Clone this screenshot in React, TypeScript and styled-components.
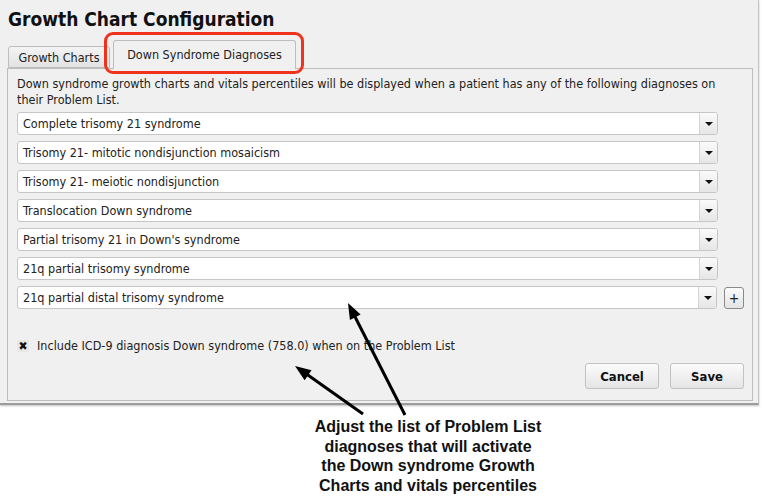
import styled, { createGlobalStyle } from "styled-components";

const GlobalStyle = createGlobalStyle`
    html, body {
        margin: 0;
        padding: 0;
        background: #ffffff;
    }
`;

const uiFont = `"DejaVu Sans Condensed", "DejaVu Sans", sans-serif`;

const Page = styled.div`
    position: relative;
    width: 762px;
    height: 503px;
    overflow: hidden;
    background: #ffffff;
`;

const Dialog = styled.div`
    box-sizing: border-box;
    width: 759px;
    height: 405px;
    background: #f0f0f0;
    border-right: 1px solid #c4c4c4;
    border-bottom: 2px solid #9c9c9c;
    box-shadow: 0 1px 2px rgba(0, 0, 0, 0.25);
    padding-top: 8px;
    font-family: ${uiFont};
    color: #222;
`;

const Title = styled.h1`
    margin: 0 0 0 8px;
    font-family: ${uiFont};
    font-size: 19px;
    font-weight: bold;
    line-height: 22px;
    color: #111;
`;

const TabBar = styled.div`
    display: flex;
    align-items: flex-end;
    height: 38px;
    margin-left: 8px;
    position: relative;
    z-index: 1;
`;

const Tab = styled.div<{ active?: boolean }>`
    box-sizing: border-box;
    position: relative;
    display: flex;
    align-items: center;
    justify-content: center;
    height: ${(p) => (p.active ? 29 : 22)}px;
    width: ${(p) => (p.active ? 183 : 102)}px;
    margin-left: ${(p) => (p.active ? 3 : 0)}px;
    margin-bottom: ${(p) => (p.active ? -1 : 0)}px;
    padding-bottom: ${(p) => (p.active ? 2 : 0)}px;
    border: 1px solid #bdbdbd;
    border-bottom: ${(p) => (p.active ? "none" : "1px solid #bdbdbd")};
    border-radius: 3px 3px 0 0;
    background: ${(p) => (p.active ? "#f0f0f0" : "linear-gradient(#f4f4f4, #e2e2e2)")};
    font-size: 12.5px;
    color: #222;
`;

const Highlight = styled.div`
    position: absolute;
    left: -10px;
    right: -9px;
    top: -9px;
    bottom: -5px;
    border: 3px solid #f0321c;
    border-radius: 9px;
    pointer-events: none;
`;

const Pane = styled.div`
    box-sizing: border-box;
    margin: 0 5px 0 7px;
    height: 333px;
    border: 1px solid #bdbdbd;
    background: #f0f0f0;
    padding: 7px 8px 0 9px;
    display: flex;
    flex-direction: column;
`;

const Description = styled.p`
    margin: 0 0 4px 0;
    font-size: 12.5px;
    line-height: 16px;
    color: #222;
`;

const ComboList = styled.div`
    display: flex;
    flex-direction: column;
    gap: 6px;
`;

const ComboRow = styled.div`
    display: flex;
    align-items: center;
    gap: 7px;
`;

const Combo = styled.div`
    box-sizing: border-box;
    width: 701px;
    height: 23px;
    display: flex;
    border: 1px solid #c6c6c6;
    border-radius: 3px;
    background: #ffffff;
    overflow: hidden;
`;

const ComboText = styled.div`
    flex: 1;
    display: flex;
    align-items: center;
    padding-left: 5px;
    font-size: 12.5px;
    color: #222;
`;

const ComboArrow = styled.div`
    width: 17px;
    border-left: 1px solid #d4d4d4;
    background: linear-gradient(#fafafa, #e6e6e6);
    display: flex;
    align-items: center;
    justify-content: center;

    &::after {
        content: "";
        border-left: 4px solid transparent;
        border-right: 4px solid transparent;
        border-top: 4px solid #111;
    }
`;

const PlusButton = styled.div`
    box-sizing: border-box;
    width: 20px;
    height: 22px;
    border: 1px solid #8a8a8a;
    border-radius: 3px;
    background: linear-gradient(#fbfbfb, #e4e4e4);
    display: flex;
    align-items: center;
    justify-content: center;
    font-size: 14px;
    color: #222;
`;

const CheckRow = styled.label`
    display: flex;
    align-items: center;
    gap: 8px;
    margin-top: 29px;
    font-size: 12.5px;
    color: #222;
`;

const CheckBox = styled.span`
    box-sizing: border-box;
    width: 12px;
    height: 12px;
    display: flex;
    align-items: center;
    justify-content: center;
    background: #e8e8e8;
    font-size: 12px;
    line-height: 12px;
    font-weight: bold;
    color: #111;
`;

const Footer = styled.div`
    display: flex;
    justify-content: flex-end;
    gap: 11px;
    margin-top: 10px;
`;

const Button = styled.button`
    box-sizing: border-box;
    width: 74px;
    height: 26px;
    border: 1px solid #c2c2c2;
    border-radius: 3px;
    background: linear-gradient(#fbfbfb, #e5e5e5);
    font-family: ${uiFont};
    font-size: 13px;
    font-weight: bold;
    color: #111;
`;

const Note = styled.div`
    width: 300px;
    margin: 12px 0 0 278px;
    text-align: center;
    font-family: "Liberation Sans", Arial, sans-serif;
    font-size: 16px;
    font-weight: bold;
    line-height: 19.5px;
    color: #111;
`;

const Overlay = styled.svg`
    position: absolute;
    left: 0;
    top: 0;
    pointer-events: none;
`;

const diagnoses = [
    "Complete trisomy 21 syndrome",
    "Trisomy 21- mitotic nondisjunction mosaicism",
    "Trisomy 21- meiotic nondisjunction",
    "Translocation Down syndrome",
    "Partial trisomy 21 in Down's syndrome",
    "21q partial trisomy syndrome",
    "21q partial distal trisomy syndrome",
];

const Arrow = ({ x1, y1, x2, y2 }: { x1: number; y1: number; x2: number; y2: number }) => {
    // head drawn at (x2, y2)
    const len = Math.hypot(x2 - x1, y2 - y1);
    const ux = (x2 - x1) / len;
    const uy = (y2 - y1) / len;
    const bx = x2 - ux * 16;
    const by = y2 - uy * 16;
    const px = -uy * 6;
    const py = ux * 6;
    return (
        <g>
            <line x1={x1} y1={y1} x2={bx + ux * 2} y2={by + uy * 2} stroke="#000" strokeWidth={3} />
            <polygon points={`${x2},${y2} ${bx + px},${by + py} ${bx - px},${by - py}`} fill="#000" />
        </g>
    );
};

const App = (): JSX.Element => {
    return (
        <Page>
            <GlobalStyle />
            <Dialog>
                <Title>Growth Chart Configuration</Title>
                <TabBar>
                    <Tab>Growth Charts</Tab>
                    <Tab active>
                        Down Syndrome Diagnoses
                        <Highlight />
                    </Tab>
                </TabBar>
                <Pane>
                    <Description>
                        Down syndrome growth charts and vitals percentiles will be displayed when a patient has any of
                        the following diagnoses on their Problem List.
                    </Description>
                    <ComboList>
                        {diagnoses.map((d, i) => (
                            <ComboRow key={d}>
                                <Combo>
                                    <ComboText>{d}</ComboText>
                                    <ComboArrow />
                                </Combo>
                                {i === diagnoses.length - 1 && <PlusButton>+</PlusButton>}
                            </ComboRow>
                        ))}
                    </ComboList>
                    <CheckRow>
                        <CheckBox>✖</CheckBox>
                        Include ICD-9 diagnosis Down syndrome (758.0) when on the Problem List
                    </CheckRow>
                    <Footer>
                        <Button>Cancel</Button>
                        <Button>Save</Button>
                    </Footer>
                </Pane>
            </Dialog>
            <Note>
                Adjust the list of Problem List
                <br />
                diagnoses that will activate
                <br />
                the Down syndrome Growth
                <br />
                Charts and vitals percentiles
            </Note>
            <Overlay width={762} height={503}>
                <Arrow x1={405} y1={415} x2={348} y2={303} />
                <Arrow x1={363} y1={414} x2={295} y2={366} />
            </Overlay>
        </Page>
    );
};

export default App;
